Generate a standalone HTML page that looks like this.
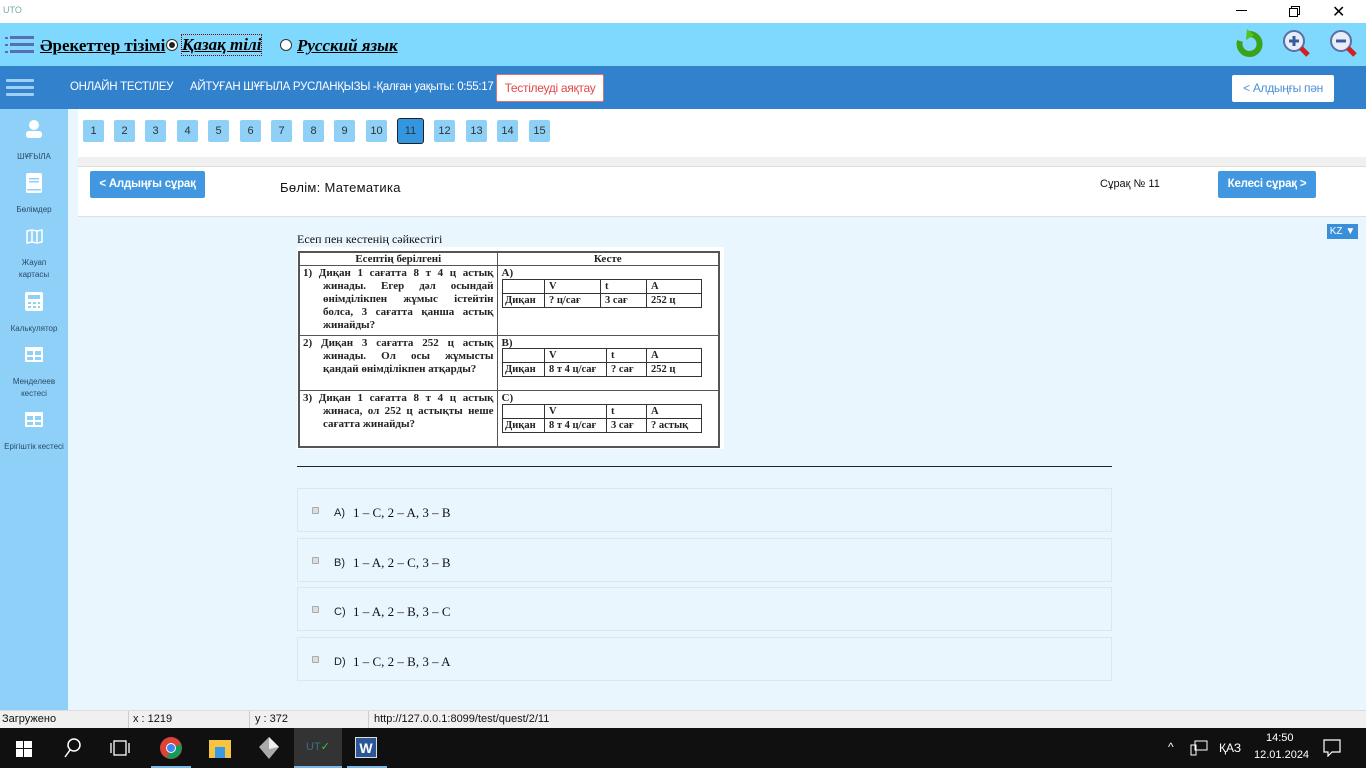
<!DOCTYPE html>
<html><head><meta charset="utf-8">
<style>
*{margin:0;padding:0;box-sizing:border-box}
body{width:1366px;height:768px;overflow:hidden;position:relative;font-family:"Liberation Sans",sans-serif;background:#eaf6fe}
.abs{position:absolute}
.titlebar{left:0;top:0;width:1366px;height:23px;background:#fff}
.tool{left:0;top:23px;width:1366px;height:43px;background:#7fd8fd}
.nav{left:0;top:66px;width:1366px;height:43px;background:#3181cd;color:#fff;font-size:11.5px;letter-spacing:-0.3px}
.side{left:0;top:109px;width:68px;height:601px;background:#8fd0f8;color:#2a4a66;font-size:8px;text-align:center}
.panel{left:78px;top:109px;width:1288px;background:#fff}
.num{position:absolute;top:120px;width:21px;height:22px;background:#8ed0f6;border-radius:2px;font-size:11px;color:#333;text-align:center;line-height:22px}
.btn{position:absolute;background:#4298e0;color:#fff;font-weight:bold;font-size:11.5px;text-align:center;border-radius:2px;letter-spacing:-0.2px}
.opt{position:absolute;left:297px;width:815px;height:44px;border:1px solid #dde6ec;background:#eaf6fe}
.opt .cb{position:absolute;left:14px;top:18px;width:7px;height:7px;border:1px solid #aaa;background:#ddd;border-radius:1px}
.opt .l{position:absolute;left:36px;top:18px;font-size:11px;color:#222}
.opt .t{position:absolute;left:55px;top:16px;font-family:"Liberation Serif",serif;font-size:13px;color:#111}
table.q{border-collapse:collapse;font-family:"Liberation Serif",serif;font-size:11px;font-weight:bold;color:#222}
td.p{border:1px solid #555;vertical-align:top;line-height:13px;padding:1px 3px 1px 23px;text-indent:-20px;text-align:justify}
table.in td{border:1px solid #333;height:14px;padding:0 4px;line-height:13px}
.status{left:0;top:710px;width:1366px;height:18px;background:#f0f0f0;border-top:1px solid #ddd;font-size:11px;color:#111}
.task{left:0;top:728px;width:1366px;height:40px;background:#101010;color:#fff}
</style></head><body>
<div class="abs titlebar">
  <div class="abs" style="left:3px;top:5px;font-size:9px;color:#7aa"><span>UTO</span></div>
  <div class="abs" style="left:1236px;top:10px;width:11px;height:1px;background:#000"></div>
  <div class="abs" style="left:1291px;top:6px;width:9px;height:9px;border:1px solid #000"></div>
  <div class="abs" style="left:1289px;top:8px;width:9px;height:9px;border:1px solid #000;background:#fff"></div>
  <div class="abs" style="left:1332px;top:2px;font-size:16px;color:#000">✕</div>
</div>
<div class="abs tool">
  <svg class="abs" style="left:5px;top:13px" width="30" height="20"><g fill="#5a6db0"><rect x="0" y="1" width="3" height="2"/><rect x="5" y="0" width="24" height="3"/><rect x="0" y="8" width="3" height="2"/><rect x="5" y="7" width="24" height="3"/><rect x="0" y="15" width="3" height="2"/><rect x="5" y="14" width="24" height="3"/></g></svg>
  <div class="abs" style="left:40px;top:13px;font-family:'Liberation Serif',serif;font-size:17px;font-weight:bold;text-decoration:underline;color:#000">Әрекеттер тізімі</div>
  <div class="abs" style="left:166px;top:16px;width:12px;height:12px;border-radius:50%;border:1px solid #333;background:#fff"><div style="margin:2px;width:6px;height:6px;border-radius:50%;background:#222"></div></div>
  <div class="abs" style="left:182px;top:12px;font-family:'Liberation Serif',serif;font-size:17px;font-weight:bold;font-style:italic;text-decoration:underline;color:#000;outline:1px dotted #800">Қазақ тілі</div>
  <div class="abs" style="left:280px;top:16px;width:12px;height:12px;border-radius:50%;border:1px solid #333;background:#fff"></div>
  <div class="abs" style="left:297px;top:13px;font-family:'Liberation Serif',serif;font-size:17px;font-weight:bold;font-style:italic;text-decoration:underline;color:#000">Русский язык</div>
  <svg class="abs" style="left:1234px;top:6px" width="30" height="30"><path d="M15 5 A10 10 0 1 1 6 12" fill="none" stroke="#3aa317" stroke-width="6"/><path d="M13 0 L20 6 L12 11Z" fill="#56c21e"/></svg>
  <svg class="abs" style="left:1282px;top:6px" width="30" height="30"><circle cx="12" cy="12" r="10" fill="#e8edf7" stroke="#5a6fa8" stroke-width="2"/><path d="M7 12H17M12 7V17" stroke="#3a5aa0" stroke-width="3"/><path d="M19 19L26 26" stroke="#d02020" stroke-width="5"/></svg>
  <svg class="abs" style="left:1329px;top:6px" width="30" height="30"><circle cx="12" cy="12" r="10" fill="#e8edf7" stroke="#5a6fa8" stroke-width="2"/><path d="M7 12H17" stroke="#3a5aa0" stroke-width="3"/><path d="M19 19L26 26" stroke="#d02020" stroke-width="5"/></svg>
</div>
<div class="abs nav">
  <svg class="abs" style="left:6px;top:13px" width="28" height="18"><g fill="#9fd0f8"><rect y="0" width="28" height="3" rx="1"/><rect y="7" width="28" height="3" rx="1"/><rect y="14" width="28" height="3" rx="1"/></g></svg>
  <div class="abs" style="left:70px;top:15px">ОНЛАЙН ТЕСТІЛЕУ</div>
  <div class="abs" style="left:190px;top:15px;white-space:nowrap">АЙТУҒАН ШҰҒЫЛА РУСЛАНҚЫЗЫ -Қалған уақыты: 0:55:17</div>
  <div class="abs" style="left:496px;top:8px;width:108px;height:28px;background:#fff;border:1px solid #e07070;border-radius:2px;color:#e04848;text-align:center;line-height:26px;font-size:12px">Тестілеуді аяқтау</div>
  <div class="abs" style="left:1232px;top:9px;width:102px;height:27px;background:#fff;border-radius:2px;color:#4a90d8;text-align:center;line-height:27px;font-size:12px">&lt; Алдыңғы пән</div>
</div>
<div class="abs side">
  <svg class="abs" style="left:25px;top:11px" width="18" height="18"><circle cx="9" cy="5" r="5" fill="#fff"/><rect x="1" y="11" width="16" height="7" rx="3" fill="#fff"/></svg>
  <div class="abs" style="left:0;top:43px;width:68px">ШҰҒЫЛА</div>
  <svg class="abs" style="left:26px;top:64px" width="16" height="20"><rect width="16" height="20" rx="2" fill="#fff"/><rect x="3" y="5" width="10" height="1.5" fill="#8fd0f8"/><rect x="3" y="8" width="10" height="1.5" fill="#8fd0f8"/><rect x="1" y="16" width="14" height="1.5" fill="#8fd0f8"/></svg>
  <div class="abs" style="left:0;top:96px;width:68px">Бөлімдер</div>
  <svg class="abs" style="left:26px;top:120px" width="17" height="15"><path d="M1 2L6 1L11 2L16 1V13L11 14L6 13L1 14Z M6 1V13 M11 2V14" fill="none" stroke="#fff" stroke-width="1.5"/></svg>
  <div class="abs" style="left:0;top:148px;width:68px;line-height:12px">Жауап<br>картасы</div>
  <svg class="abs" style="left:25px;top:183px" width="18" height="19"><rect width="18" height="19" rx="2" fill="#fff"/><rect x="3" y="3" width="12" height="4" fill="#8fd0f8"/><g fill="#8fd0f8"><rect x="3" y="10" width="3" height="2"/><rect x="8" y="10" width="3" height="2"/><rect x="13" y="10" width="2" height="2"/><rect x="3" y="14" width="3" height="2"/><rect x="8" y="14" width="3" height="2"/><rect x="13" y="14" width="2" height="2"/></g></svg>
  <div class="abs" style="left:0;top:215px;width:68px">Калькулятор</div>
  <svg class="abs" style="left:25px;top:238px" width="18" height="15"><rect width="18" height="15" rx="1" fill="#fff"/><rect x="2" y="4" width="6" height="4" fill="#8fd0f8"/><rect x="10" y="4" width="6" height="4" fill="#8fd0f8"/><rect x="2" y="10" width="6" height="3" fill="#8fd0f8"/><rect x="10" y="10" width="6" height="3" fill="#8fd0f8"/></svg>
  <div class="abs" style="left:0;top:267px;width:68px;line-height:12px">Менделеев<br>кестесі</div>
  <svg class="abs" style="left:25px;top:303px" width="18" height="15"><rect width="18" height="15" rx="1" fill="#fff"/><rect x="2" y="4" width="6" height="4" fill="#8fd0f8"/><rect x="10" y="4" width="6" height="4" fill="#8fd0f8"/><rect x="2" y="10" width="6" height="3" fill="#8fd0f8"/><rect x="10" y="10" width="6" height="3" fill="#8fd0f8"/></svg>
  <div class="abs" style="left:0;top:333px;width:68px">Ерігіштік кестесі</div>
</div>
<div class="abs panel" style="height:48px"></div>
<div class="abs" style="left:78px;top:157px;width:1288px;height:10px;background:#f0f0f0;border-bottom:1px solid #ddd"></div>
<div class="abs" style="left:78px;top:167px;width:1288px;height:50px;background:#fff;border-bottom:1px solid #dde"></div>
<div class="num" style="left:83px">1</div><div class="num" style="left:114px">2</div><div class="num" style="left:145px">3</div><div class="num" style="left:177px">4</div><div class="num" style="left:208px">5</div><div class="num" style="left:240px">6</div><div class="num" style="left:271px">7</div><div class="num" style="left:303px">8</div><div class="num" style="left:334px">9</div><div class="num" style="left:366px">10</div>
<div class="num" style="left:397px;top:118px;width:27px;height:26px;line-height:24px;background:#3296e0;border:1px solid #222;border-radius:3px">11</div>
<div class="num" style="left:434px">12</div><div class="num" style="left:466px">13</div><div class="num" style="left:497px">14</div><div class="num" style="left:529px">15</div>
<div class="btn" style="left:90px;top:171px;width:115px;height:27px;line-height:27px">&lt; Алдыңғы сұрақ</div>
<div class="abs" style="left:280px;top:180px;font-size:13px;color:#111;letter-spacing:.3px">Бөлім: Математика</div>
<div class="abs" style="left:1100px;top:178px;font-size:11px;color:#111">Сұрақ № 11</div>
<div class="btn" style="left:1218px;top:171px;width:98px;height:27px;line-height:27px">Келесі сұрақ &gt;</div>
<div class="abs" style="left:1327px;top:224px;width:31px;height:15px;background:#3a8fd8;color:#fff;font-size:10px;line-height:15px;text-align:center">KZ ▼</div>

<div class="abs" style="left:297px;top:232px;font-family:'Liberation Serif',serif;font-size:12px;color:#111">Есеп пен кестенің сәйкестігі</div>
<div class="abs" style="left:297px;top:247px;width:427px;height:202px;background:#fff"></div>
<table class="q abs" style="left:298px;top:251px;width:422px;border:2px solid #555">
<tr style="height:13px"><td style="width:198px;border:1px solid #555;text-align:center">Есептің берілгені</td><td style="border:1px solid #555;text-align:center">Кесте</td></tr>
<tr style="height:70px"><td class="p">1) Диқан 1 сағатта 8 т 4 ц астық жинады. Егер дәл осындай өнімділікпен жұмыс істейтін болса, 3 сағатта қанша астық жинайды?</td><td style="border:1px solid #555;vertical-align:top;padding:1px 4px">А)</td></tr>
<tr style="height:55px"><td class="p">2) Диқан 3 сағатта 252 ц астық жинады. Ол осы жұмысты қандай өнімділікпен атқарды?</td><td style="border:1px solid #555;vertical-align:top;padding:1px 4px">В)</td></tr>
<tr style="height:56px"><td class="p">3) Диқан 1 сағатта 8 т 4 ц астық жинаса, ол 252 ц астықты неше сағатта жинайды?</td><td style="border:1px solid #555;vertical-align:top;padding:1px 4px">С)</td></tr>
</table>
<table class="q in abs" style="left:502px;top:279px;width:200px;border:1px solid #333;font-size:10.5px"><tr><td style="width:42px"></td><td style="width:56px">V</td><td style="width:46px">t</td><td>A</td></tr><tr><td style="padding:0 2px">Диқан</td><td>? ц/сағ</td><td>3 сағ</td><td>252 ц</td></tr></table>
<table class="q in abs" style="left:502px;top:348px;width:200px;border:1px solid #333;font-size:10.5px"><tr><td style="width:42px"></td><td style="width:62px">V</td><td style="width:40px">t</td><td>A</td></tr><tr><td style="padding:0 2px">Диқан</td><td>8 т 4 ц/сағ</td><td>? сағ</td><td>252 ц</td></tr></table>
<table class="q in abs" style="left:502px;top:404px;width:200px;border:1px solid #333;font-size:10.5px"><tr><td style="width:42px"></td><td style="width:62px">V</td><td style="width:40px">t</td><td>A</td></tr><tr><td style="padding:0 2px">Диқан</td><td>8 т 4 ц/сағ</td><td>3 сағ</td><td>? астық</td></tr></table>
<div class="abs" style="left:297px;top:466px;width:815px;height:1px;background:#222"></div>

<div class="opt" style="top:488px"><div class="cb"></div><div class="l">A)</div><div class="t">1 – C, 2 – A, 3 – B</div></div>
<div class="opt" style="top:538px"><div class="cb"></div><div class="l">B)</div><div class="t">1 – A, 2 – C, 3 – B</div></div>
<div class="opt" style="top:587px"><div class="cb"></div><div class="l">C)</div><div class="t">1 – A, 2 – B, 3 – C</div></div>
<div class="opt" style="top:637px"><div class="cb"></div><div class="l">D)</div><div class="t">1 – C, 2 – B, 3 – A</div></div>

<div class="abs status">
  <div class="abs" style="left:2px;top:2px">Загружено</div>
  <div class="abs" style="left:128px;top:0;width:1px;height:18px;background:#ccc"></div>
  <div class="abs" style="left:133px;top:2px">x : 1219</div>
  <div class="abs" style="left:249px;top:0;width:1px;height:18px;background:#ccc"></div>
  <div class="abs" style="left:255px;top:2px">y : 372</div>
  <div class="abs" style="left:368px;top:0;width:1px;height:18px;background:#ccc"></div>
  <div class="abs" style="left:374px;top:2px">http://127.0.0.1:8099/test/quest/2/11</div>
</div>
<div class="abs task">
  <svg class="abs" style="left:16px;top:13px" width="16" height="16"><g fill="#fff"><rect x="0" y="0" width="7" height="7"/><rect x="8" y="0" width="8" height="7"/><rect x="0" y="8" width="7" height="8"/><rect x="8" y="8" width="8" height="8"/></g></svg>
  <svg class="abs" style="left:63px;top:10px" width="18" height="20"><circle cx="11" cy="7" r="6" fill="none" stroke="#fff" stroke-width="1.5"/><path d="M7 12L2 19" stroke="#fff" stroke-width="1.5"/></svg>
  <svg class="abs" style="left:110px;top:12px" width="20" height="16"><rect x="4" y="1" width="12" height="14" fill="none" stroke="#fff" stroke-width="1.3"/><path d="M1 3V13M19 3V13" stroke="#fff" stroke-width="1.3"/></svg>
  <svg class="abs" style="left:159px;top:8px" width="24" height="24"><circle cx="12" cy="12" r="11" fill="#db4437"/><path d="M12 12L22 8A11 11 0 0 1 8 22Z" fill="#0f9d58"/><circle cx="12" cy="12" r="5" fill="#fff"/><circle cx="12" cy="12" r="4" fill="#4285f4"/></svg>
  <div class="abs" style="left:151px;top:38px;width:40px;height:2px;background:#7ab8e8"></div>
  <svg class="abs" style="left:209px;top:10px" width="22" height="20"><rect y="2" width="22" height="18" fill="#f5c542"/><rect x="6" y="9" width="10" height="11" fill="#3a9ae8"/></svg>
  <svg class="abs" style="left:259px;top:9px" width="20" height="22"><path d="M10 0L20 10L10 22L0 10Z" fill="#aaa"/><path d="M10 0L20 10L10 12Z" fill="#eee"/></svg>
  <div class="abs" style="left:294px;top:0;width:48px;height:40px;background:#333"></div>
  <div class="abs" style="left:306px;top:12px;font-size:11px;color:#3c6e86">UT<span style="color:#3c3">✓</span></div>
  <div class="abs" style="left:294px;top:38px;width:48px;height:2px;background:#7ab8e8"></div>
  <div class="abs" style="left:355px;top:9px;width:22px;height:21px;background:#2b5797;color:#fff;font-weight:bold;font-size:14px;text-align:center;line-height:21px;border:1px solid #ddd">W</div>
  <div class="abs" style="left:347px;top:38px;width:40px;height:2px;background:#7ab8e8"></div>
  <div class="abs" style="left:1168px;top:12px;font-size:12px">^</div>
  <svg class="abs" style="left:1190px;top:12px" width="18" height="16"><rect x="5" y="1" width="12" height="9" fill="none" stroke="#fff"/><rect x="1" y="5" width="5" height="10" fill="none" stroke="#fff"/></svg>
  <div class="abs" style="left:1219px;top:13px;font-size:12px">ҚАЗ</div>
  <div class="abs" style="left:1266px;top:4px;font-size:11px">14:50</div>
  <div class="abs" style="left:1254px;top:21px;font-size:11px">12.01.2024</div>
  <svg class="abs" style="left:1323px;top:11px" width="18" height="18"><path d="M1 1H17V13H9L5 17V13H1Z" fill="none" stroke="#fff" stroke-width="1.2"/></svg>
</div>
</body></html>
